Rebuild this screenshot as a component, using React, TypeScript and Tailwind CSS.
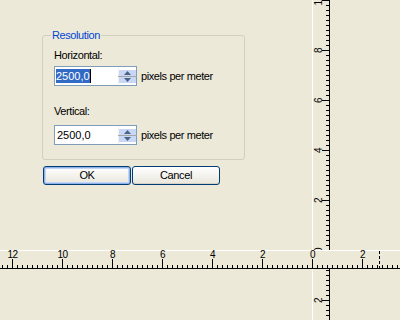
import React from "react";

function Arrow({ down }: { down?: boolean }) {
  return (
    <svg width="7" height="4" viewBox="0 0 7 4" className="block">
      {down ? (
        <polygon points="0,0 7,0 3.5,4" fill="#4D6185" />
      ) : (
        <polygon points="3.5,0 7,4 0,4" fill="#4D6185" />
      )}
    </svg>
  );
}

function SpinInput({ selected }: { selected?: boolean }) {
  return (
    <div className="flex h-[20px] w-[83px] items-center border border-[#7F9DB9] bg-white">
      <div className="flex flex-1 items-center pl-[1px] tracking-normal">
        {selected ? (
          <>
            <span className="h-[14px] bg-[#316AC5] leading-[14px] text-white">2500,0</span>
            <span className="h-[14px] w-[1px] bg-black" />
          </>
        ) : (
          <span className="pl-[1px] leading-[14px]">2500,0</span>
        )}
      </div>
      <div className="flex h-full w-[18px] flex-col justify-center border-l border-[#F2F2F2]">
        <div className="flex h-[6px] items-center justify-center bg-[#C9D7F7]">
          <Arrow />
        </div>
        <div className="-ml-[1px] h-[1px] w-[19px] bg-[#A5A5A5]" />
        <div className="flex h-[6px] items-center justify-center bg-[#C9D7F7]">
          <Arrow down />
        </div>
      </div>
    </div>
  );
}

function HRuler() {
  const minors: number[] = [];
  for (let x = 2; x < 400; x += 5) minors.push(x);
  const majors = [
    { x: 12, l: "12" },
    { x: 62, l: "10" },
    { x: 112, l: "8" },
    { x: 162, l: "6" },
    { x: 212, l: "4" },
    { x: 262, l: "2" },
    { x: 312, l: "0" },
    { x: 362, l: "2" },
  ];
  return (
    <svg className="col-span-3 block" width={400} height={19} shapeRendering="crispEdges">
      <rect x={0} y={0} width={400} height={1} fill="#FFFFFF" />
      <rect x={0} y={18} width={400} height={1} fill="#000000" />
      {minors.map((x) => (
        <rect key={x} x={x} y={15} width={1} height={3} fill="#000000" />
      ))}
      {majors.map((m) => (
        <rect key={"t" + m.x} x={m.x} y={9} width={1} height={9} fill="#000000" />
      ))}
      {majors.map((m) => (
        <text
          key={"l" + m.x}
          x={m.x + 0.5}
          y={8}
          textAnchor="middle"
          fontSize="10"
          letterSpacing="-0.6"
          fill="#000000"
        >
          {m.l}
        </text>
      ))}
      <rect x={379} y={1} width={1} height={3} fill="#000000" />
      <rect x={379} y={6} width={1} height={3} fill="#000000" />
      <rect x={379} y={11} width={1} height={3} fill="#000000" />
      <rect x={379} y={16} width={1} height={2} fill="#000000" />
    </svg>
  );
}

function VRuler({ offset, height, labels }: { offset: number; height: number; labels: number[] }) {
  const minors: number[] = [];
  for (let y = 0; y < 330; y += 5) {
    if (y >= offset && y < offset + height) minors.push(y);
  }
  const majors = [0, 50, 100, 150, 200, 250, 300].filter((y) => y >= offset && y < offset + height);
  return (
    <svg className="block" width={18} height={height} shapeRendering="crispEdges">
      <rect x={0} y={0} width={1} height={height} fill="#FFFFFF" />
      <rect x={17} y={0} width={1} height={height} fill="#000000" />
      {minors.map((y) => (
        <rect key={y} x={14} y={y - offset} width={3} height={1} fill="#000000" />
      ))}
      {majors.map((y) => (
        <rect key={"t" + y} x={10} y={y - offset} width={7} height={1} fill="#000000" />
      ))}
      {labels.map((y) => (
        <text
          key={"l" + y}
          transform={`translate(10, ${y - offset + 0.5}) rotate(-90)`}
          textAnchor="middle"
          fontSize="10"
          letterSpacing="-0.6"
          fill="#000000"
        >
          {String(Math.abs(250 - y) / 25)}
        </text>
      ))}
    </svg>
  );
}

export default function App() {
  return (
    <div className="grid h-[320px] w-[400px] grid-cols-[312px_18px_1fr] grid-rows-[250px_19px_1fr] overflow-hidden bg-[#ECE9D8] font-['Liberation_Sans',Arial,sans-serif] text-[11px] leading-[13px] tracking-[-0.4px] text-black">
      <div className="pl-[42px] pt-[29px]">
        <div className="flex w-[203px] flex-col">
          <fieldset className="rounded-[3px] border border-[#D0D0BF] p-0">
            <legend className="ml-[8px] px-[1px] leading-[13px] text-[#0046D5]">Resolution</legend>
            <div className="pb-[14px] pl-[11px]">
              <div className="pt-[7px]">Horizontal:</div>
              <div className="mt-[4px] flex items-center gap-[4px]">
                <SpinInput selected />
                <span>pixels per meter</span>
              </div>
              <div className="mt-[19px]">Vertical:</div>
              <div className="mt-[7px] flex items-center gap-[4px]">
                <SpinInput />
                <span>pixels per meter</span>
              </div>
            </div>
          </fieldset>
          <div className="ml-[1px] mt-[6px] flex gap-[1px]">
            <button className="flex h-[19px] w-[88px] items-center justify-center rounded-[3px] border border-[#003C74] bg-linear-to-b from-[#FFFFFF] to-[#E8E6DC] shadow-[inset_0_0_0_1px_#8FB1EC,inset_0_0_0_2px_#C4D5F6]">
              OK
            </button>
            <button className="flex h-[19px] w-[88px] items-center justify-center rounded-[3px] border border-[#003C74] bg-linear-to-b from-[#FFFFFF] to-[#E8E6DC] shadow-[inset_0_-1px_0_#D6D0C5]">
              Cancel
            </button>
          </div>
        </div>
      </div>
      <VRuler offset={0} height={250} labels={[0, 50, 100, 150, 200, 250]} />
      <div />
      <HRuler />
      <div />
      <VRuler offset={269} height={51} labels={[300]} />
      <div />
    </div>
  );
}
